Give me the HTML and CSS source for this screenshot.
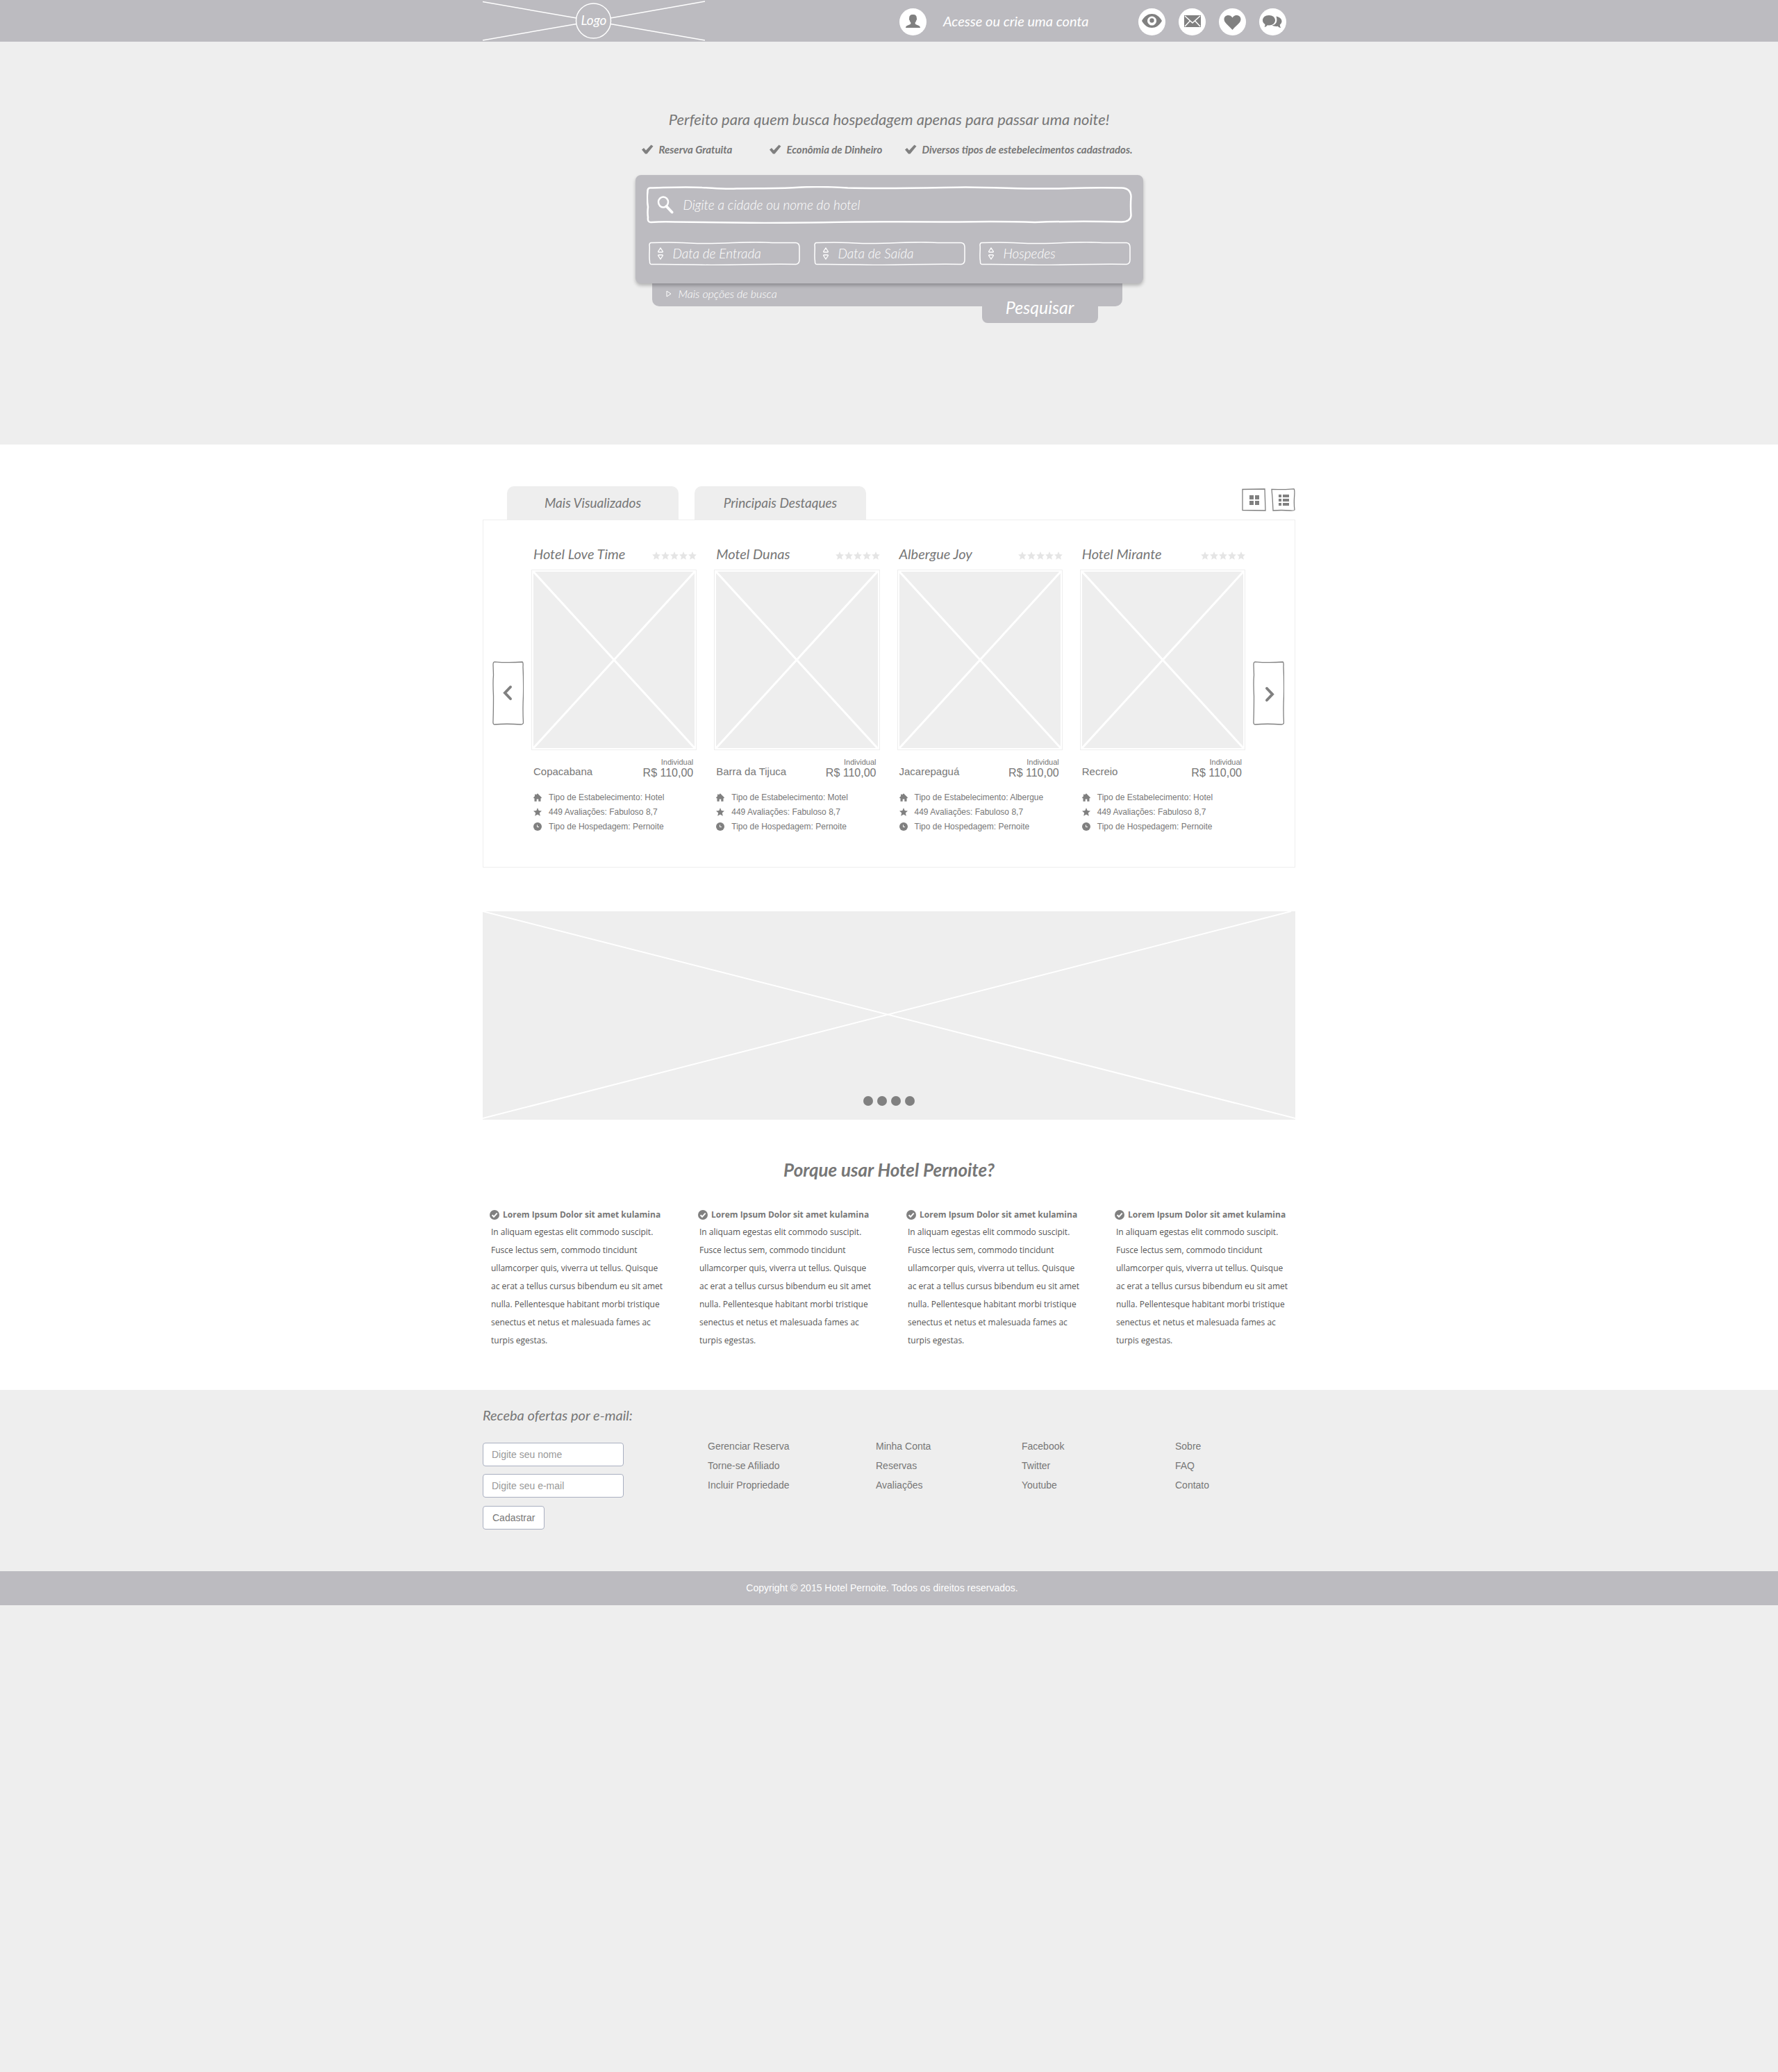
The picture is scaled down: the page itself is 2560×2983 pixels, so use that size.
FILE: index.html
```html
<!DOCTYPE html>
<html lang="pt-BR">
<head>
<meta charset="utf-8">
<meta name="viewport" content="width=device-width, initial-scale=1">
<title>Hotel Pernoite</title>
<link rel="stylesheet" href="styles.css">
</head>
<body>
<svg class="sprite" aria-hidden="true">
  <symbol id="i-check" viewBox="0 0 18 14"><path d="M1 7.500l3-2.500 3 3.500L14.500 0.500 17.500 2.500 8.500 13.500 6 13.500z"/></symbol>
  <symbol id="i-star" viewBox="0 0 12 12"><path d="M6 0l1.700 4 4.300.400-3.200 2.900 1 4.400L6 9.400l-3.800 2.300 1-4.400L0 4.400l4.300-.400z"/></symbol>
  <symbol id="i-home" viewBox="0 0 12 12"><path d="M6 .300L12 6.200 11.300 7.200H10.500V11.700H7.300V8.400H4.700V11.700H1.500V7.200H.700L0 6.200 2 4.200V1.500H3.600V2.600z"/></symbol>
  <symbol id="i-clock" viewBox="0 0 12 12"><circle cx="6" cy="6" r="6"/><path d="M5.500 3.500V6.500H8" fill="none" stroke="#fff"/></symbol>
  <symbol id="i-ok" viewBox="0 0 14 14"><circle cx="7" cy="7" r="7"/><path d="M3.600 7.300l2.400 2.500L10.700 4.600" fill="none" stroke="#fff" stroke-width="2"/></symbol>
  <symbol id="i-sort" viewBox="0 0 10 18"><path d="M5 1L8.300 6Q8.500 7 7.500 7H2.500Q1.500 7 1.700 6zM5 17L8.300 12Q8.500 11 7.500 11H2.500Q1.500 11 1.700 12z" fill="none" stroke="#fff" stroke-width="1.300"/></symbol>
  <symbol id="i-frame" viewBox="0 0 218 34" preserveAspectRatio="none"><path d="M3 1.500C25 .500 45 .500 70 2.500 110 3 140-.500 168 1L178 1.500 212 1.500Q217 2 217 8V26Q217 32 212 32.500C170 31.500 130 33.500 90 33.500 60 33 30 32 5 32.500Q1 33 1.500 28C0 20 2 10 1 5Q1 2 3 1.500z" fill="none" stroke="#fff" stroke-width="1.500"/></symbol>
  <symbol id="i-frame-wide" viewBox="0 0 700 54" preserveAspectRatio="none"><path d="M5 2.500C30 2 55 .500 80 2 95 2.500 110 4.500 130 3.500 160 3 190 3.500 215 2 245 0 265 1 290 2.500 350 4 420 2 460 1.500 520 2 560 5 610 3 640 2 660 2 685 2.500Q698 3 698.500 15Q697.500 28 698.500 42Q698 51 685 51.500Q620 50 560 52Q510 50.500 450 51.500Q350 51 300 51.500Q240 52.500 170 53Q90 52 40 51.500Q20 51 6 52Q1 52 2 45Q1 38 2 30Q0 18 1.500 8Q1 3 5 2.500z" fill="none" stroke="#fff" stroke-width="2.500"/></symbol>
</svg>

<header class="topbar">
  <div class="container topbar-row">
    <a class="logo" href="#" aria-label="Logo">
      <svg class="logo-art" viewBox="0 0 320 60"><g fill="none" stroke="#fff" stroke-width="1.500"><path d="M0 2.500L135 26M184 34.500L320 58M0 58L135 34.500M184 26L320 2"/><circle cx="159.500" cy="30" r="25"/></g></svg>
      <span class="logo-text">Logo</span>
    </a>
    <a class="account" href="#">
      <span class="bubble"><svg viewBox="0 0 39 39"><path d="M19.500 9c4 0 5.500 2 5.300 5.200.500.300.500 2.300-.400 2.800-.3 1.600-.900 2.500-1.700 3.300v2c1.500 2 7.300 2 7.300 5.700H9c0-3.700 5.800-3.700 7.300-5.700v-2c-.8-.8-1.400-1.700-1.700-3.300-.9-.5-.9-2.500-.4-2.800C14 11 15.500 9 19.500 9z"/></svg></span>
      <span class="account-text">Acesse ou crie uma conta</span>
    </a>
    <nav class="quick" aria-label="Atalhos">
      <a class="bubble" href="#" aria-label="Visualizados"><svg viewBox="0 0 39 39"><path fill-rule="evenodd" d="M5 18C9 11 14 8 19.500 8S30 11 34 18C30 25 25 28 19.500 28S9 25 5 18zM19.500 11.500a6.500 6.500 0 1 0 .1 0z"/><circle cx="19.500" cy="17.500" r="3.200"/></svg></a>
      <a class="bubble" href="#" aria-label="Mensagens"><svg viewBox="0 0 39 39"><path d="M8 10H32V27H8z"/><path d="M9 11L20 21 31 11M9 26L16.500 18M31 26L23.500 18" fill="none" stroke="#fff" stroke-width="1.500"/></svg></a>
      <a class="bubble" href="#" aria-label="Favoritos"><svg viewBox="0 0 39 39"><path d="M19.500 31C13 23.500 7.500 21 7.500 15.500c0-6 8.500-8 12-2 3.500-6 12-4 12 2C31.500 21 26 23.500 19.500 31z"/></svg></a>
      <a class="bubble" href="#" aria-label="Conversas"><svg viewBox="0 0 39 39"><path d="M14 10c5.500 0 9 3.200 9 7.300s-3.500 7.200-9 7.200l-2.200-.2C10.500 26 9 27 7.500 27c1-1.500 1-2.800.9-4C6.200 21.700 5 19.600 5 17.300 5 13.200 8.500 10 14 10z"/><path d="M24.500 11.500c4.500 1 8 3.500 8 7 0 2-1 3.800-2.700 5 0 1.500.3 3.200 1.700 4.500-2 0-3.500-.7-4.700-2.200-3.500.5-6.500-.1-8.300-1.300 5.500-1 8.500-5 6-13z"/></svg></a>
    </nav>
  </div>
</header>

<section class="hero">
  <h1 class="hero-title">Perfeito para quem busca hospedagem apenas para passar uma noite!</h1>
  <ul class="perks">
    <li><svg><use href="#i-check"/></svg>Reserva Gratuita</li>
    <li><svg><use href="#i-check"/></svg>Econômia de Dinheiro</li>
    <li><svg><use href="#i-check"/></svg>Diversos tipos de estebelecimentos cadastrados.</li>
  </ul>
  <form class="search">
    <div class="search-panel">
      <label class="field field-main">
        <svg class="field-frame"><use href="#i-frame-wide"/></svg>
        <svg class="field-glass" viewBox="0 0 24 26"><ellipse cx="9" cy="9" rx="7" ry="7.500" fill="none" stroke="#fff" stroke-width="2.500"/><path d="M13.500 15L21.500 23.500" stroke="#fff" stroke-width="4" stroke-linecap="round"/></svg>
        <input type="text" placeholder="Digite a cidade ou nome do hotel" aria-label="Cidade ou nome do hotel">
      </label>
      <div class="field-row">
        <label class="field"><svg class="field-frame"><use href="#i-frame"/></svg><svg class="field-sort"><use href="#i-sort"/></svg><input type="text" placeholder="Data de Entrada" aria-label="Data de Entrada"></label>
        <label class="field"><svg class="field-frame"><use href="#i-frame"/></svg><svg class="field-sort"><use href="#i-sort"/></svg><input type="text" placeholder="Data de Saída" aria-label="Data de Saída"></label>
        <label class="field"><svg class="field-frame"><use href="#i-frame"/></svg><svg class="field-sort"><use href="#i-sort"/></svg><select aria-label="Hospedes"><option>Hospedes</option></select></label>
      </div>
    </div>
    <div class="search-more">
      <a class="more-link" href="#"><svg viewBox="0 0 8 10"><path d="M1 1L7 5 1 9z" fill="none" stroke="#fff"/></svg>Mais opções de busca</a>
      <button class="search-go" type="submit">Pesquisar</button>
    </div>
  </form>
</section>

<main class="main">
  <div class="container">
    <div class="tabs">
      <button class="tab" type="button">Mais Visualizados</button>
      <button class="tab" type="button">Principais Destaques</button>
      <div class="views">
        <button class="view" type="button" aria-label="Grade"><svg viewBox="0 0 35 33"><path d="M1 1.500L33 1 34 32 1 31.500z" fill="none" stroke="#808080" stroke-width="1.300"/><path d="M11 10h6v6h-6zM19 10h6v6h-6zM11 18h6v6h-6zM19 18h6v6h-6z"/></svg></button>
        <button class="view" type="button" aria-label="Lista"><svg viewBox="0 0 35 33"><path d="M1 1.500Q16 2 33 .800Q34.500 2 33.500 14 33 24 34 31 33 32.500 27 32 15 31 3 32 2.500 16 1 1.500z" fill="none" stroke="#808080" stroke-width="1.300"/><path d="M11 9h4v4h-4zM17 9h9v4h-9zM11 15h4v4h-4zM17 15h9v4h-9zM11 21h4v4h-4zM17 21h9v4h-9z"/></svg></button>
      </div>
    </div>

    <section class="carousel">
      <button class="arrow" type="button" aria-label="Anterior"><svg viewBox="0 0 45 92"><path d="M3 .800Q22 2.500 43 1 44.500 1 44 8 45 30 44.500 50 43.500 70 44.500 89 44 91 41 91 20 89.500 3 91 .500 91 1 86 1.500 70 1.500 50 .500 30 1.500 20L1 5Q1 1 3 .800z" fill="none" stroke="#808080" stroke-width="1.300"/><path d="M26 37L18 45.500 26 54" fill="none" stroke="#808080" stroke-width="4" stroke-linecap="round"/></svg></button>
      <div class="cards">
        <article class="card">
          <div class="card-head"><h2>Hotel Love Time</h2><span class="stars"><svg><use href="#i-star"/></svg><svg><use href="#i-star"/></svg><svg><use href="#i-star"/></svg><svg><use href="#i-star"/></svg><svg><use href="#i-star"/></svg></span></div>
          <div class="photo"><svg viewBox="0 0 232 254" preserveAspectRatio="none"><path d="M0 0L232 254M232 0L0 254"/></svg></div>
          <div class="card-info"><span class="place">Copacabana</span><span class="price"><small>Individual</small>R$ 110,00</span></div>
          <ul class="facts"><li><svg><use href="#i-home"/></svg>Tipo de Estabelecimento: Hotel</li><li><svg><use href="#i-star"/></svg>449 Avaliações: Fabuloso 8,7</li><li><svg><use href="#i-clock"/></svg>Tipo de Hospedagem: Pernoite</li></ul>
        </article>
        <article class="card">
          <div class="card-head"><h2>Motel Dunas</h2><span class="stars"><svg><use href="#i-star"/></svg><svg><use href="#i-star"/></svg><svg><use href="#i-star"/></svg><svg><use href="#i-star"/></svg><svg><use href="#i-star"/></svg></span></div>
          <div class="photo"><svg viewBox="0 0 232 254" preserveAspectRatio="none"><path d="M0 0L232 254M232 0L0 254"/></svg></div>
          <div class="card-info"><span class="place">Barra da Tijuca</span><span class="price"><small>Individual</small>R$ 110,00</span></div>
          <ul class="facts"><li><svg><use href="#i-home"/></svg>Tipo de Estabelecimento: Motel</li><li><svg><use href="#i-star"/></svg>449 Avaliações: Fabuloso 8,7</li><li><svg><use href="#i-clock"/></svg>Tipo de Hospedagem: Pernoite</li></ul>
        </article>
        <article class="card">
          <div class="card-head"><h2>Albergue Joy</h2><span class="stars"><svg><use href="#i-star"/></svg><svg><use href="#i-star"/></svg><svg><use href="#i-star"/></svg><svg><use href="#i-star"/></svg><svg><use href="#i-star"/></svg></span></div>
          <div class="photo"><svg viewBox="0 0 232 254" preserveAspectRatio="none"><path d="M0 0L232 254M232 0L0 254"/></svg></div>
          <div class="card-info"><span class="place">Jacarepaguá</span><span class="price"><small>Individual</small>R$ 110,00</span></div>
          <ul class="facts"><li><svg><use href="#i-home"/></svg>Tipo de Estabelecimento: Albergue</li><li><svg><use href="#i-star"/></svg>449 Avaliações: Fabuloso 8,7</li><li><svg><use href="#i-clock"/></svg>Tipo de Hospedagem: Pernoite</li></ul>
        </article>
        <article class="card">
          <div class="card-head"><h2>Hotel Mirante</h2><span class="stars"><svg><use href="#i-star"/></svg><svg><use href="#i-star"/></svg><svg><use href="#i-star"/></svg><svg><use href="#i-star"/></svg><svg><use href="#i-star"/></svg></span></div>
          <div class="photo"><svg viewBox="0 0 232 254" preserveAspectRatio="none"><path d="M0 0L232 254M232 0L0 254"/></svg></div>
          <div class="card-info"><span class="place">Recreio</span><span class="price"><small>Individual</small>R$ 110,00</span></div>
          <ul class="facts"><li><svg><use href="#i-home"/></svg>Tipo de Estabelecimento: Hotel</li><li><svg><use href="#i-star"/></svg>449 Avaliações: Fabuloso 8,7</li><li><svg><use href="#i-clock"/></svg>Tipo de Hospedagem: Pernoite</li></ul>
        </article>
      </div>
      <button class="arrow" type="button" aria-label="Próximo"><svg viewBox="0 0 45 92"><path d="M3 .800Q22 2.500 43 1 44.500 1 44 8 45 30 44.500 50 43.500 70 44.500 89 44 91 41 91 20 89.500 3 91 .500 91 1 86 1.500 70 1.500 50 .500 30 1.500 20L1 5Q1 1 3 .800z" fill="none" stroke="#808080" stroke-width="1.300"/><path d="M20 39L28 47.500 20 56" fill="none" stroke="#808080" stroke-width="4" stroke-linecap="round"/></svg></button>
    </section>

    <section class="banner" aria-label="Destaques">
      <svg class="banner-cross" viewBox="0 0 1170 300" preserveAspectRatio="none"><path d="M0 0L1170 298M0 298L1164 0"/></svg>
      <div class="dots"><button type="button" aria-label="1"></button><button type="button" aria-label="2"></button><button type="button" aria-label="3"></button><button type="button" aria-label="4"></button></div>
    </section>

    <h2 class="why-title">Porque usar Hotel Pernoite?</h2>
    <div class="why">
      <section><h3><svg><use href="#i-ok"/></svg>Lorem Ipsum Dolor sit amet kulamina</h3><p>In aliquam egestas elit commodo suscipit. Fusce lectus sem, commodo tincidunt ullamcorper quis, viverra ut tellus. Quisque ac erat a tellus cursus bibendum eu sit amet nulla. Pellentesque habitant morbi tristique senectus et netus et malesuada fames ac turpis egestas.</p></section>
      <section><h3><svg><use href="#i-ok"/></svg>Lorem Ipsum Dolor sit amet kulamina</h3><p>In aliquam egestas elit commodo suscipit. Fusce lectus sem, commodo tincidunt ullamcorper quis, viverra ut tellus. Quisque ac erat a tellus cursus bibendum eu sit amet nulla. Pellentesque habitant morbi tristique senectus et netus et malesuada fames ac turpis egestas.</p></section>
      <section><h3><svg><use href="#i-ok"/></svg>Lorem Ipsum Dolor sit amet kulamina</h3><p>In aliquam egestas elit commodo suscipit. Fusce lectus sem, commodo tincidunt ullamcorper quis, viverra ut tellus. Quisque ac erat a tellus cursus bibendum eu sit amet nulla. Pellentesque habitant morbi tristique senectus et netus et malesuada fames ac turpis egestas.</p></section>
      <section><h3><svg><use href="#i-ok"/></svg>Lorem Ipsum Dolor sit amet kulamina</h3><p>In aliquam egestas elit commodo suscipit. Fusce lectus sem, commodo tincidunt ullamcorper quis, viverra ut tellus. Quisque ac erat a tellus cursus bibendum eu sit amet nulla. Pellentesque habitant morbi tristique senectus et netus et malesuada fames ac turpis egestas.</p></section>
    </div>
  </div>
</main>

<footer>
  <div class="container footer-grid">
    <form class="news">
      <h2>Receba ofertas por e-mail:</h2>
      <input type="text" placeholder="Digite seu nome" aria-label="Nome">
      <input type="email" placeholder="Digite seu e-mail" aria-label="E-mail">
      <button type="submit">Cadastrar</button>
    </form>
    <ul class="links"><li><a href="#">Gerenciar Reserva</a></li><li><a href="#">Torne-se Afiliado</a></li><li><a href="#">Incluir Propriedade</a></li></ul>
    <ul class="links"><li><a href="#">Minha Conta</a></li><li><a href="#">Reservas</a></li><li><a href="#">Avaliações</a></li></ul>
    <ul class="links"><li><a href="#">Facebook</a></li><li><a href="#">Twitter</a></li><li><a href="#">Youtube</a></li></ul>
    <ul class="links"><li><a href="#">Sobre</a></li><li><a href="#">FAQ</a></li><li><a href="#">Contato</a></li></ul>
  </div>
  <p class="copyright">Copyright © 2015 Hotel Pernoite. Todos os direitos reservados.</p>
</footer>
</body>
</html>
```
FILE: styles.css
```css
:root {
  --bar: #bcbbc0;
  --soft: #eeeeee;
  --ink: #777777;
  --icon: #808080;
  --hand: Lato, "Open Sans", sans-serif;
  --sans: "Liberation Sans", Arial, sans-serif;
}

* { box-sizing: border-box; }

body {
  margin: 0;
  min-height: 100vh;
  background: var(--soft);
  color: var(--ink);
  font-family: var(--sans);
  font-size: 14px;
}

h1, h2, h3, p, ul { margin: 0; padding: 0; }
ul { list-style: none; }
a { color: inherit; text-decoration: none; }
button, input, select { font: inherit; color: inherit; margin: 0; padding: 0; border: 0; background: none; }
svg { display: block; fill: var(--icon); flex: none; }
.sprite { position: absolute; width: 0; height: 0; }
.container { max-width: 1170px; margin: 0 auto; }

/* Top bar */
.topbar { background: var(--bar); color: #fff; font: italic 20px/24px var(--hand); }
.topbar-row { display: flex; align-items: center; height: 60px; padding-right: 13px; }
.logo { display: grid; place-items: center; width: 320px; font-size: 19px; }
.logo > * { grid-area: 1 / 1; }
.logo-art { width: 320px; height: 60px; }
.logo-text { padding-bottom: 2px; }
.account { display: flex; align-items: center; gap: 24px; margin-left: 280px; }
.account-text { padding-bottom: 4px; }
.bubble { display: block; width: 39px; height: 39px; border-radius: 50%; background: #fff; }
.quick { display: flex; gap: 19px; margin-left: auto; }
.topbar .account, .quick { padding-top: 3px; }

/* Search hero */
.hero { padding: 97px 0 199px; }
.hero-title { font: italic 400 22px/30px var(--hand); text-align: center; }
.perks { display: grid; grid-template-columns: 184px 195px auto; justify-content: center; margin-top: 18px; padding-right: 6px; font: italic 700 15px/20px var(--hand); }
.perks li { display: flex; align-items: center; gap: 7px; white-space: nowrap; }
.perks svg { width: 18px; height: 14px; }
.search { max-width: 731px; margin: 27px auto 0; color: #fff; font: italic 300 19px/24px var(--hand); }
.search-panel { position: relative; padding: 16px 16px 26px; border-radius: 8px; background: var(--bar); box-shadow: 0 3px 5px rgba(0, 0, 0, .25); }
.field { position: relative; display: flex; align-items: center; min-width: 0; height: 34px; padding-left: 12px; gap: 13px; }
.field-main { height: 54px; padding-left: 15px; gap: 14px; }
.field-frame { position: absolute; inset: 0; width: 100%; height: 100%; }
.field-glass { width: 24px; height: 26px; position: relative; }
.field-sort { width: 10px; height: 18px; }
.field input, .field select { position: relative; flex: 1; min-width: 0; outline: 0; appearance: none; }
.field input::placeholder { color: #fff; opacity: 1; }
.field-row { display: grid; grid-template-columns: repeat(3, minmax(0, 1fr)); gap: 20px; margin-top: 26px; padding: 0 2px 0 3px; }
.search-more { display: flex; justify-content: space-between; height: 33px; margin: 0 30px 0 24px; padding: 0 35px 0 20px; border-radius: 0 0 10px 10px; background: var(--bar); }
.more-link { display: flex; align-items: center; gap: 10px; padding-bottom: 3px; font-size: 16px; }
.more-link svg { width: 8px; height: 10px; }
.search-go { width: 167px; height: 57px; padding-top: 10px; border-radius: 0 0 8px 8px; background: var(--bar); font-size: 25px; font-weight: 400; font-style: italic; }

/* Listing */
.main { background: #fff; padding: 60px 0 58px; }
.tabs { display: flex; align-items: center; gap: 23px; padding-left: 35px; }
.tab { width: 247px; height: 48px; border-radius: 10px 10px 0 0; background: var(--soft); font: italic 19px/24px var(--hand); }
.views { display: flex; gap: 7px; margin-left: auto; margin-bottom: 10px; }
.view { width: 35px; height: 33px; }
.carousel { display: flex; align-items: center; gap: 11px; padding: 36px 15px 47px 13px; border: 1px solid var(--soft); }
.arrow { flex: none; width: 45px; height: 92px; margin-top: 10px; }
.cards { flex: 1; display: grid; grid-template-columns: repeat(4, 1fr); gap: 25px; }
.card-head { display: flex; align-items: center; justify-content: space-between; padding-left: 3px; }
.card-head h2 { font: italic 400 20px/24px var(--hand); }
.stars { display: flex; gap: 1px; padding-top: 6px; }
.stars svg { width: 12px; height: 12px; fill: #e5e5e5; }
.photo { height: 260px; margin-top: 11px; padding: 2px; border: 1px solid var(--soft); }
.photo svg { width: 100%; height: 100%; background: var(--soft); stroke: #fff; stroke-width: 3; }
.card-info { display: flex; align-items: flex-end; justify-content: space-between; margin-top: 10px; padding: 0 5px 0 3px; }
.place { font-size: 15px; line-height: 18px; padding-bottom: 2px; }
.price { font-size: 16px; line-height: 18px; text-align: right; }
.price small { display: block; font-size: 11px; line-height: 14px; }
.facts { margin-top: 16px; padding-left: 3px; font-size: 12px; line-height: 21px; }
.facts li { display: flex; align-items: center; gap: 10px; }
.facts svg { width: 12px; height: 12px; margin-bottom: 2px; }

/* Banner */
.banner { display: grid; height: 300px; margin-top: 63px; background: var(--soft); }
.banner > * { grid-area: 1 / 1; }
.banner-cross { width: 100%; height: 300px; stroke: #fff; stroke-width: 2; }
.dots { display: flex; gap: 6px; place-self: end center; padding-bottom: 20px; }
.dots button { width: 14px; height: 14px; border-radius: 50%; background: var(--icon); }

/* Reasons */
.why-title { margin-top: 57px; font: italic 700 26px/30px var(--hand); text-align: center; }
.why { display: grid; grid-template-columns: repeat(4, 252px); justify-content: space-between; margin-top: 40px; padding: 0 8px 0 10px; font: 12px/26px "Open Sans", sans-serif; }
.why h3 { display: flex; align-items: center; gap: 5px; font-size: 12px; font-weight: 700; line-height: 20px; white-space: nowrap; }
.why h3 svg { width: 14px; height: 14px; }
.why p { margin-top: 2px; padding-left: 2px; color: #555; }

/* Footer */
.footer-grid { display: grid; grid-template-columns: 324px 242px 210px 221px 1fr; padding: 24px 0 60px; }
.news { display: flex; flex-direction: column; align-items: flex-start; gap: 11px; }
.news h2 { margin-bottom: 17px; font: italic 400 20px/24px var(--hand); }
.news input, .news button { height: 34px; padding: 0 12px; border: 1px solid #a9afc0; border-radius: 4px; background: #fff; }
.news input { width: 203px; }
.news button { margin-top: 1px; padding: 0 13px; }
.news input::placeholder { color: #999; opacity: 1; }
.links { padding-top: 43px; line-height: 28px; }
.copyright { padding-right: 20px; background: var(--bar); color: #fff; line-height: 49px; text-align: center; }
```
